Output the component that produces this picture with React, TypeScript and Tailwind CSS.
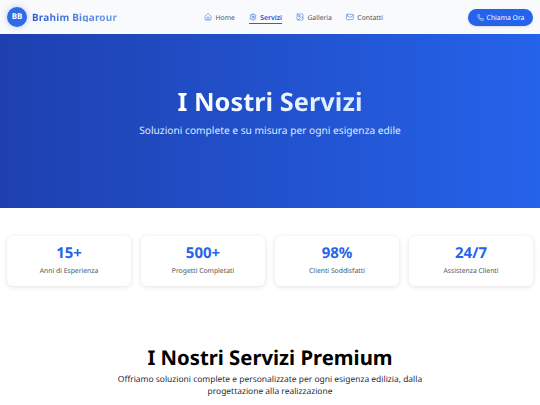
import { Home, Settings, Image, Mail, Phone } from "lucide-react";

const nav = [
  { label: "Home", Icon: Home },
  { label: "Servizi", Icon: Settings, active: true },
  { label: "Galleria", Icon: Image },
  { label: "Contatti", Icon: Mail },
];
const stats = [
  ["15+", "Anni di Esperienza"],
  ["500+", "Progetti Completati"],
  ["98%", "Clienti Soddisfatti"],
  ["24/7", "Assistenza Clienti"],
];

export default function App() {
  return (
    <div className="h-[405px] w-[540px] overflow-hidden bg-white font-['Noto_Sans',sans-serif] [text-rendering:geometricPrecision]">
      <header className="flex h-[34px] items-center bg-[#f8fafc] px-[7px] shadow-sm">
        <div className="flex w-[197px] items-center gap-[5px]">
          <div className="flex h-[20px] w-[20px] items-center justify-center rounded-full bg-[#2f6be6] text-[8px] font-bold text-white shadow-[0_0_6px_rgba(37,99,235,0.3)]">BB</div>
          <span className="bg-gradient-to-r from-[#2f5fd0] to-[#6b9bec] bg-clip-text text-[10px] font-bold leading-none tracking-[0.2px] text-transparent">Brahim Bigarour</span>
        </div>
        <nav className="flex items-center gap-[14px] pt-[1px]">
          {nav.map(({ label, Icon, active }) => (
            <div key={label} className={`flex items-center gap-[3.5px] pb-[1px] text-[6.8px] leading-[8px] ${active ? "border-b border-[#2563eb] font-semibold text-[#1d4ed8]" : "border-b border-transparent text-[#4b5563]"}`}>
              <Icon size={8} strokeWidth={active ? 1.75 : 1.5} className="text-[#2563eb]" />
              <span className="pt-[2px]">{label}</span>
            </div>
          ))}
        </nav>
        <div className="ml-auto flex h-[17px] w-[65px] items-center justify-center gap-[3px] rounded-full bg-[#2563eb] text-[6.8px] leading-[8px] text-white shadow-sm">
          <Phone size={7} strokeWidth={1.75} />
          <span className="pt-[2px]">Chiama Ora</span>
        </div>
      </header>
      <section className="flex h-[174px] flex-col items-center bg-gradient-to-r from-[#1e40af] to-[#2563eb] pt-[51px] text-white">
        <h1 className="bg-gradient-to-r from-white to-[#dbeafe] bg-clip-text text-[25.4px] font-bold leading-[34px] text-transparent">I Nostri Servizi</h1>
        <p className="mt-[4px] text-[10.2px] leading-[14px] text-[#dbeafe]">Soluzioni complete e su misura per ogni esigenza edile</p>
      </section>
      <section className="grid grid-cols-4 gap-[10px] px-[7px] pt-[28px]">
        {stats.map(([n, l]) => (
          <div key={l} className="flex h-[50px] flex-col items-center justify-center rounded-[6px] bg-white pb-[3px] shadow-[0_1px_5px_rgba(0,0,0,0.12)]">
            <div className="text-[15px] font-bold leading-[20px] text-[#2563eb]">{n}</div>
            <div className="mt-[3px] text-[6.8px] leading-[10px] text-[#4b5563]">{l}</div>
          </div>
        ))}
      </section>
      <section className="flex flex-col items-center pt-[57px] text-center">
        <h2 className="text-[20.3px] font-bold leading-[28px] text-black">I Nostri Servizi Premium</h2>
        <p className="mt-[3px] w-[320px] text-[8.45px] leading-[12px] text-[#1f2937]">Offriamo soluzioni complete e personalizzate per ogni esigenza edilizia, dalla progettazione alla realizzazione</p>
      </section>
    </div>
  );
}
